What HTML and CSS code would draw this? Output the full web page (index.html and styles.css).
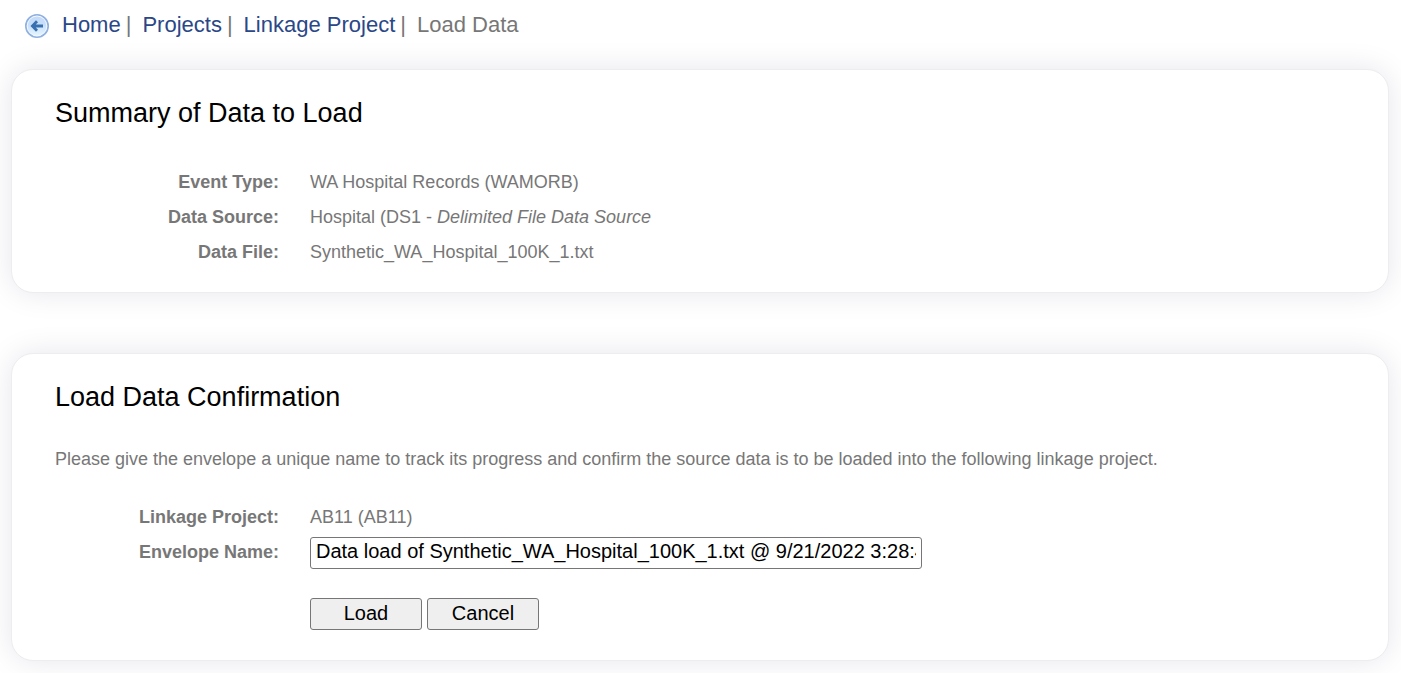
FILE: index.html
```html
<!DOCTYPE html>
<html lang="en">
<head>
<meta charset="utf-8">
<title>Load Data</title>
<link rel="stylesheet" href="styles.css">
</head>
<body>
<nav class="breadcrumb" aria-label="Breadcrumb">
  <a class="back" href="#" aria-label="Back">
    <svg class="back-icon" viewBox="0 0 24 24" aria-hidden="true">
      <defs>
        <linearGradient id="disc" x1="0" y1="0" x2="0" y2="1">
          <stop offset="0" stop-color="#c3dafa"/>
          <stop offset="0.45" stop-color="#c9e0fc"/>
          <stop offset="1" stop-color="#e4f5ff"/>
        </linearGradient>
      </defs>
      <circle cx="12" cy="12" r="11.2" fill="#f4f9ff" stroke="#8fb0e0" stroke-width="1.6"/>
      <circle cx="12" cy="12" r="9.4" fill="url(#disc)"/>
      <path d="M12 7.2 7.4 12l4.6 4.8M8 12h10" fill="none" stroke="#3b70b0" stroke-width="2.8"/>
    </svg>
  </a>
  <ol class="crumbs">
    <li class="crumb"><a class="crumb-link" href="#">Home</a></li>
    <li class="crumb"><a class="crumb-link" href="#">Projects</a></li>
    <li class="crumb"><a class="crumb-link" href="#">Linkage Project</a></li>
    <li class="crumb" aria-current="page">Load Data</li>
  </ol>
</nav>
<main class="panels">
  <section class="panel">
    <h2 class="panel-title">Summary of Data to Load</h2>
    <dl class="fields">
      <dt class="label">Event Type:</dt>
      <dd class="value">WA Hospital Records (WAMORB)</dd>
      <dt class="label">Data Source:</dt>
      <dd class="value">Hospital (DS1 - <em>Delimited File Data Source</em></dd>
      <dt class="label">Data File:</dt>
      <dd class="value">Synthetic_WA_Hospital_100K_1.txt</dd>
    </dl>
  </section>
  <section class="panel">
    <h2 class="panel-title">Load Data Confirmation</h2>
    <p class="intro">Please give the envelope a unique name to track its progress and confirm the source data is to be loaded into the following linkage project.</p>
    <form class="fields">
      <span class="label">Linkage Project:</span>
      <span class="value">AB11 (AB11)</span>
      <label class="label" for="envelope">Envelope Name:</label>
      <input class="text-input" id="envelope" type="text" value="Data load of Synthetic_WA_Hospital_100K_1.txt @ 9/21/2022 3:28:41 PM">
      <div class="actions">
        <button class="button" type="button">Load</button>
        <button class="button" type="button">Cancel</button>
      </div>
    </form>
  </section>
</main>
</body>
</html>
```
FILE: styles.css
```css
* {
  box-sizing: border-box;
}

body {
  margin: 0;
  background: #fff;
  color: #777;
  font-family: "Liberation Sans", Arial, sans-serif;
  font-size: 18px;
  line-height: 35px;
}

.breadcrumb {
  display: flex;
  align-items: center;
  gap: 13px;
  padding: 12px 25px 0;
  font-size: 22px;
  line-height: 26px;
}

.back {
  display: flex;
  padding-top: 2px;
}

.back-icon {
  width: 24px;
  height: 24px;
}

.crumbs {
  display: flex;
  flex-wrap: wrap;
  margin: 0;
  padding: 0;
  list-style: none;
}

.crumb:not(:last-child)::after {
  content: "|";
  margin: 0 11px 0 5px;
}

.crumb-link {
  color: #2a4788;
  text-decoration: none;
}

.panels {
  display: flex;
  flex-direction: column;
  gap: 60px;
  padding: 31px 12px 12px 11px;
}

.panel {
  padding: 28px 43px 22px;
  border: 1px solid #ededef;
  border-radius: 22px;
  background: #fff;
  box-shadow: 0 0 30px #e6e6ec;
}

.panel-title {
  margin: 0 0 37px;
  color: #000;
  font-size: 27px;
  font-weight: 400;
  line-height: 30px;
}

.intro {
  margin: 0 0 30px;
  line-height: 21px;
}

.fields {
  display: grid;
  grid-template-columns: 224px minmax(0, 1fr);
  column-gap: 31px;
  margin: 0;
}

.label {
  font-weight: 700;
  text-align: right;
}

.value {
  margin: 0;
}

.text-input {
  width: 100%;
  max-width: 612px;
  height: 32px;
  align-self: center;
  padding: 0 5px 2px;
  border: 1px solid #767676;
  border-radius: 3px;
  background: #fff;
  color: #000;
  font-family: inherit;
  font-size: 20px;
}

.actions {
  display: flex;
  grid-column: 2;
  gap: 5px;
  padding: 28px 0 8px;
}

.button {
  width: 112px;
  height: 32px;
  padding: 0 0 2px;
  border: 1px solid #767676;
  border-radius: 3px;
  background: #efefef;
  color: #000;
  font-family: inherit;
  font-size: 20px;
}
```
